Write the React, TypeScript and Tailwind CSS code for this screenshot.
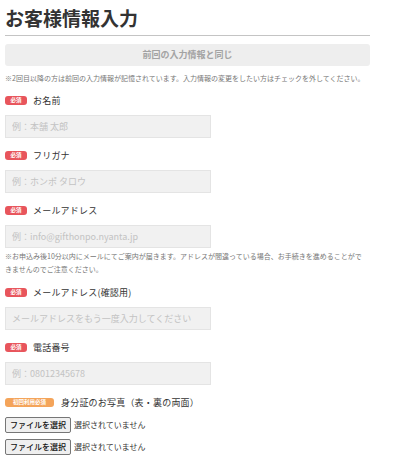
import React from "react";

const font = { fontFamily: '"Noto Sans CJK JP", "Noto Sans", sans-serif' };

function Badge({ kind }: { kind: "req" | "first" }) {
  if (kind === "req") {
    return (
      <span className="inline-flex h-[9px] w-[22px] items-center justify-center rounded-[3px] bg-[#e8555c] text-[5.5px] font-bold leading-none text-white">
        必須
      </span>
    );
  }
  return (
    <span className="inline-flex h-[9px] w-[49px] items-center justify-center rounded-[3px] bg-[#f4a45a] text-[5.5px] font-bold leading-none text-white">
      初回利用必須
    </span>
  );
}

function Field({
  label,
  placeholder,
  className = "",
  children,
}: {
  label: string;
  placeholder: string;
  className?: string;
  children?: React.ReactNode;
}) {
  return (
    <div className={className}>
      <div className="flex h-[13px] items-center gap-[6px]">
        <Badge kind="req" />
        <span className="text-[9px] font-normal leading-[13px] tracking-[0.2px] text-[#333]">{label}</span>
      </div>
      <input
        type="text"
        placeholder={placeholder}
        className="mt-[8px] block h-[23px] w-[206px] border border-[#e4e4e4] bg-[#f1f1f1] px-[6px] text-[9px] text-[#333] outline-none placeholder:text-[#c3c3c3]"
        style={font}
      />
      {children}
    </div>
  );
}

function FileRow({ className = "" }: { className?: string }) {
  return (
    <div className={`flex items-center gap-[3px] ${className}`}>
      <span className="inline-flex h-[16px] w-[66px] items-center justify-center rounded-[2px] border border-[#767676] bg-[#efefef] text-[8px] font-medium leading-none text-[#111]">
        ファイルを選択
      </span>
      <span className="text-[8px] leading-none text-[#333]">選択されていません</span>
    </div>
  );
}

export default function App() {
  return (
    <div className="h-[458px] w-[400px] overflow-hidden bg-white pl-[5px]" style={font}>
      <div className="w-[365px]">
        <h1 className="border-b border-[#c4c4c4] pb-[5px] pt-[6px] text-[19px] font-bold leading-[24px] text-[#333]">
          お客様情報入力
        </h1>
        <div className="mt-[8px] flex h-[22px] items-center justify-center rounded-[3px] bg-[#eeeeee] text-[9px] font-bold text-[#a3a3a3]">
          前回の入力情報と同じ
        </div>
        <p className="mt-[6px] whitespace-nowrap text-[7px] leading-[12px] text-[#777]">
          ※2回目以降の方は前回の入力情報が記憶されています。入力情報の変更をしたい方はチェックを外してください。
        </p>

        <Field className="mt-[10px]" label="お名前" placeholder="例：本舗 太郎" />
        <Field className="mt-[11px]" label="フリガナ" placeholder="例：ホンポ タロウ" />
        <Field className="mt-[11px]" label="メールアドレス" placeholder="例：info@gifthonpo.nyanta.jp">
          <p className="mt-[2px] w-[361px] text-[7px] leading-[13px] text-[#777]">
            ※お申込み後10分以内にメールにてご案内が届きます。アドレスが間違っている場合、お手続きを進めることができませんのでご注意ください。
          </p>
        </Field>
        <Field className="mt-[10px]" label="メールアドレス(確認用)" placeholder="メールアドレスをもう一度入力してください" />
        <Field className="mt-[11px]" label="電話番号" placeholder="例：08012345678" />

        <div className="mt-[11px] flex h-[13px] items-center gap-[7px]">
          <Badge kind="first" />
          <span className="text-[9px] font-normal leading-[13px] tracking-[0.2px] text-[#333]">身分証のお写真（表・裏の両面）</span>
        </div>
        <FileRow className="mt-[8px]" />
        <FileRow className="mt-[6px]" />
      </div>
    </div>
  );
}
